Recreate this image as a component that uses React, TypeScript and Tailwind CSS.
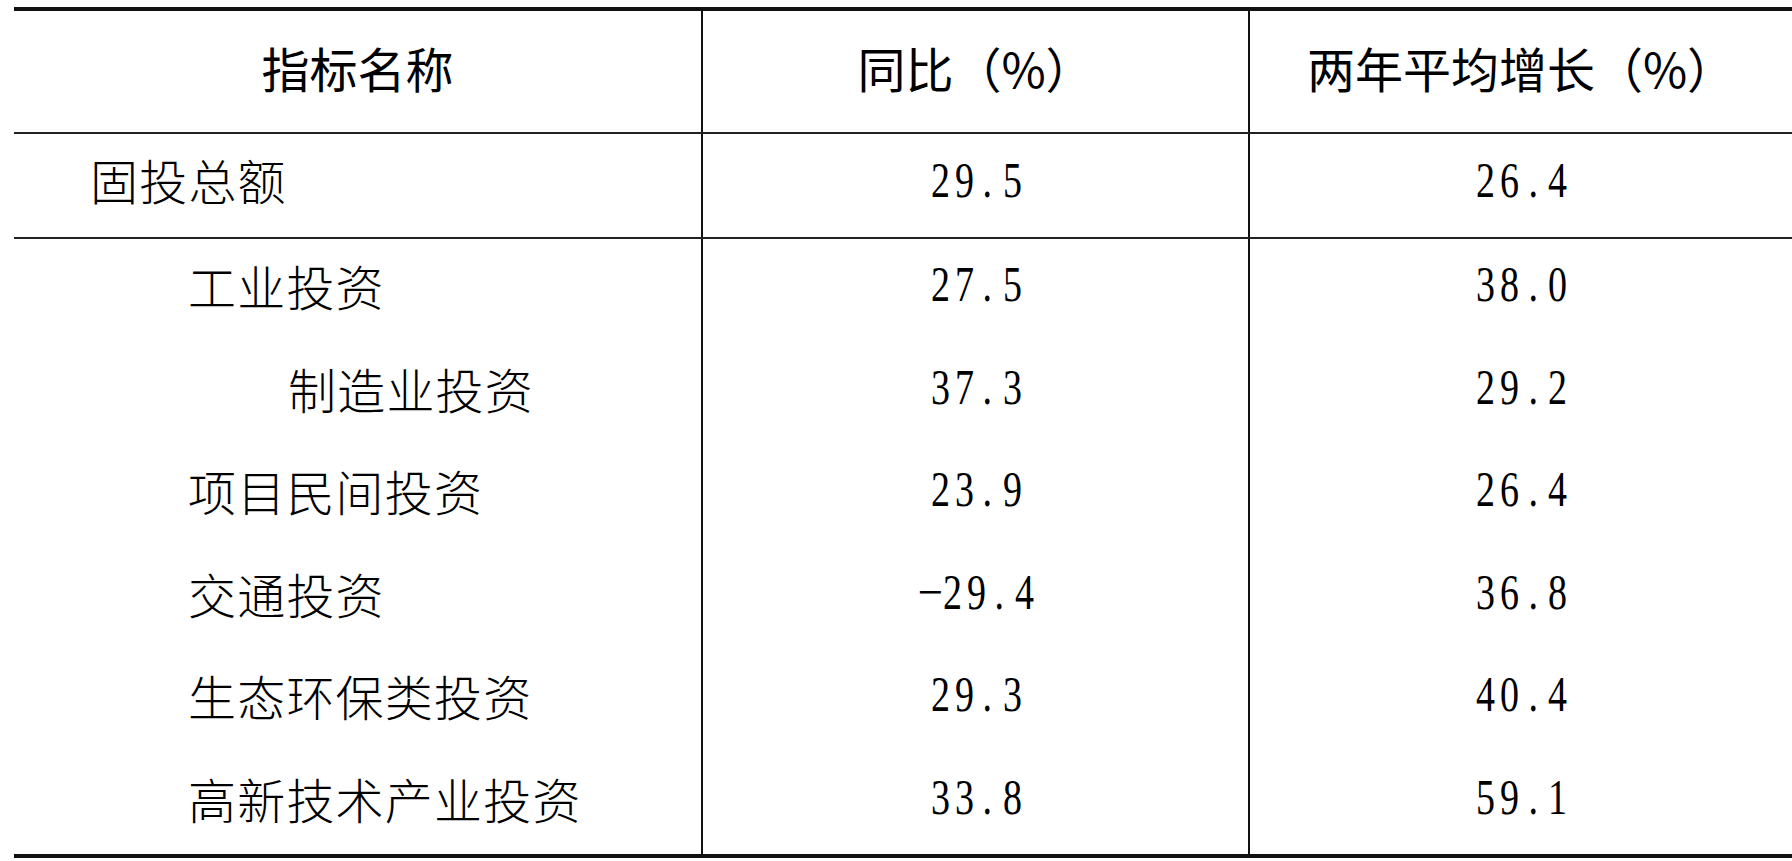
const rows = [
  { name: "工业投资", level: 1, yoy: "27.5", avg: "38.0" },
  { name: "制造业投资", level: 2, yoy: "37.3", avg: "29.2" },
  { name: "项目民间投资", level: 1, yoy: "23.9", avg: "26.4" },
  { name: "交通投资", level: 1, yoy: "−29.4", avg: "36.8" },
  { name: "生态环保类投资", level: 1, yoy: "29.3", avg: "40.4" },
  { name: "高新技术产业投资", level: 1, yoy: "33.8", avg: "59.1" },
]

const cjk = { fontFamily: '"Noto Sans CJK SC", "Noto Sans", sans-serif' }

// digits in the source are half-width, fixed advance, narrow serif
const Num = ({ value }: { value: string }) => (
  <span className="flex -translate-y-[6px]" style={{ fontFamily: '"Liberation Serif", serif' }}>
    {value.split("").map((ch, i) => (
      <span key={i} className="inline-block w-[24px] text-center text-[50px] leading-none">
        <span className={ch === "−" ? "inline-block scale-x-[0.9]" : "inline-block scale-x-[0.76]"}>{ch}</span>
      </span>
    ))}
  </span>
)

const App = () => {
  return (
    <div className="w-[1792px] h-[861px] bg-white text-black pt-[7px] pl-[14px] overflow-hidden">
      <div className="w-[1778px] border-t-4 border-b-4 border-[#111]">
        {/* header */}
        <div className="grid grid-cols-[689px_547px_542px] border-b-2 border-[#222]" style={cjk}>
          <div className="h-[121px] pb-[10px] flex items-center justify-center border-r-2 border-[#111] text-[48px] font-normal">
            指标名称
          </div>
          <div className="h-[121px] pb-[10px] flex items-center justify-center border-r-2 border-[#111] text-[48px] font-normal">
            同比（%）
          </div>
          <div className="h-[121px] pb-[10px] flex items-center justify-center text-[48px] font-normal">
            两年平均增长（%）
          </div>
        </div>

        {/* total */}
        <div className="grid grid-cols-[689px_547px_542px] border-b-2 border-[#222]">
          <div className="h-[103px] pb-[14px] flex items-center pl-[76px] border-r-2 border-[#111] text-[48px] font-light tracking-[1.2px]" style={cjk}>
            固投总额
          </div>
          <div className="h-[103px] flex items-center justify-center border-r-2 border-[#111]">
            <Num value="29.5" />
          </div>
          <div className="h-[103px] flex items-center justify-center">
            <Num value="26.4" />
          </div>
        </div>

        {rows.map((r) => (
          <div key={r.name} className="grid grid-cols-[689px_547px_542px]">
            <div
              className={
                "h-[102.5px] pb-[10px] flex items-center border-r-2 border-[#111] text-[48px] font-light tracking-[1.2px] " +
                (r.level === 2 ? "pl-[274px]" : "pl-[174px]")
              }
              style={cjk}
            >
              {r.name}
            </div>
            <div className="h-[102.5px] flex items-center justify-center border-r-2 border-[#111]">
              <Num value={r.yoy} />
            </div>
            <div className="h-[102.5px] flex items-center justify-center">
              <Num value={r.avg} />
            </div>
          </div>
        ))}
      </div>
    </div>
  )
}

export default App
